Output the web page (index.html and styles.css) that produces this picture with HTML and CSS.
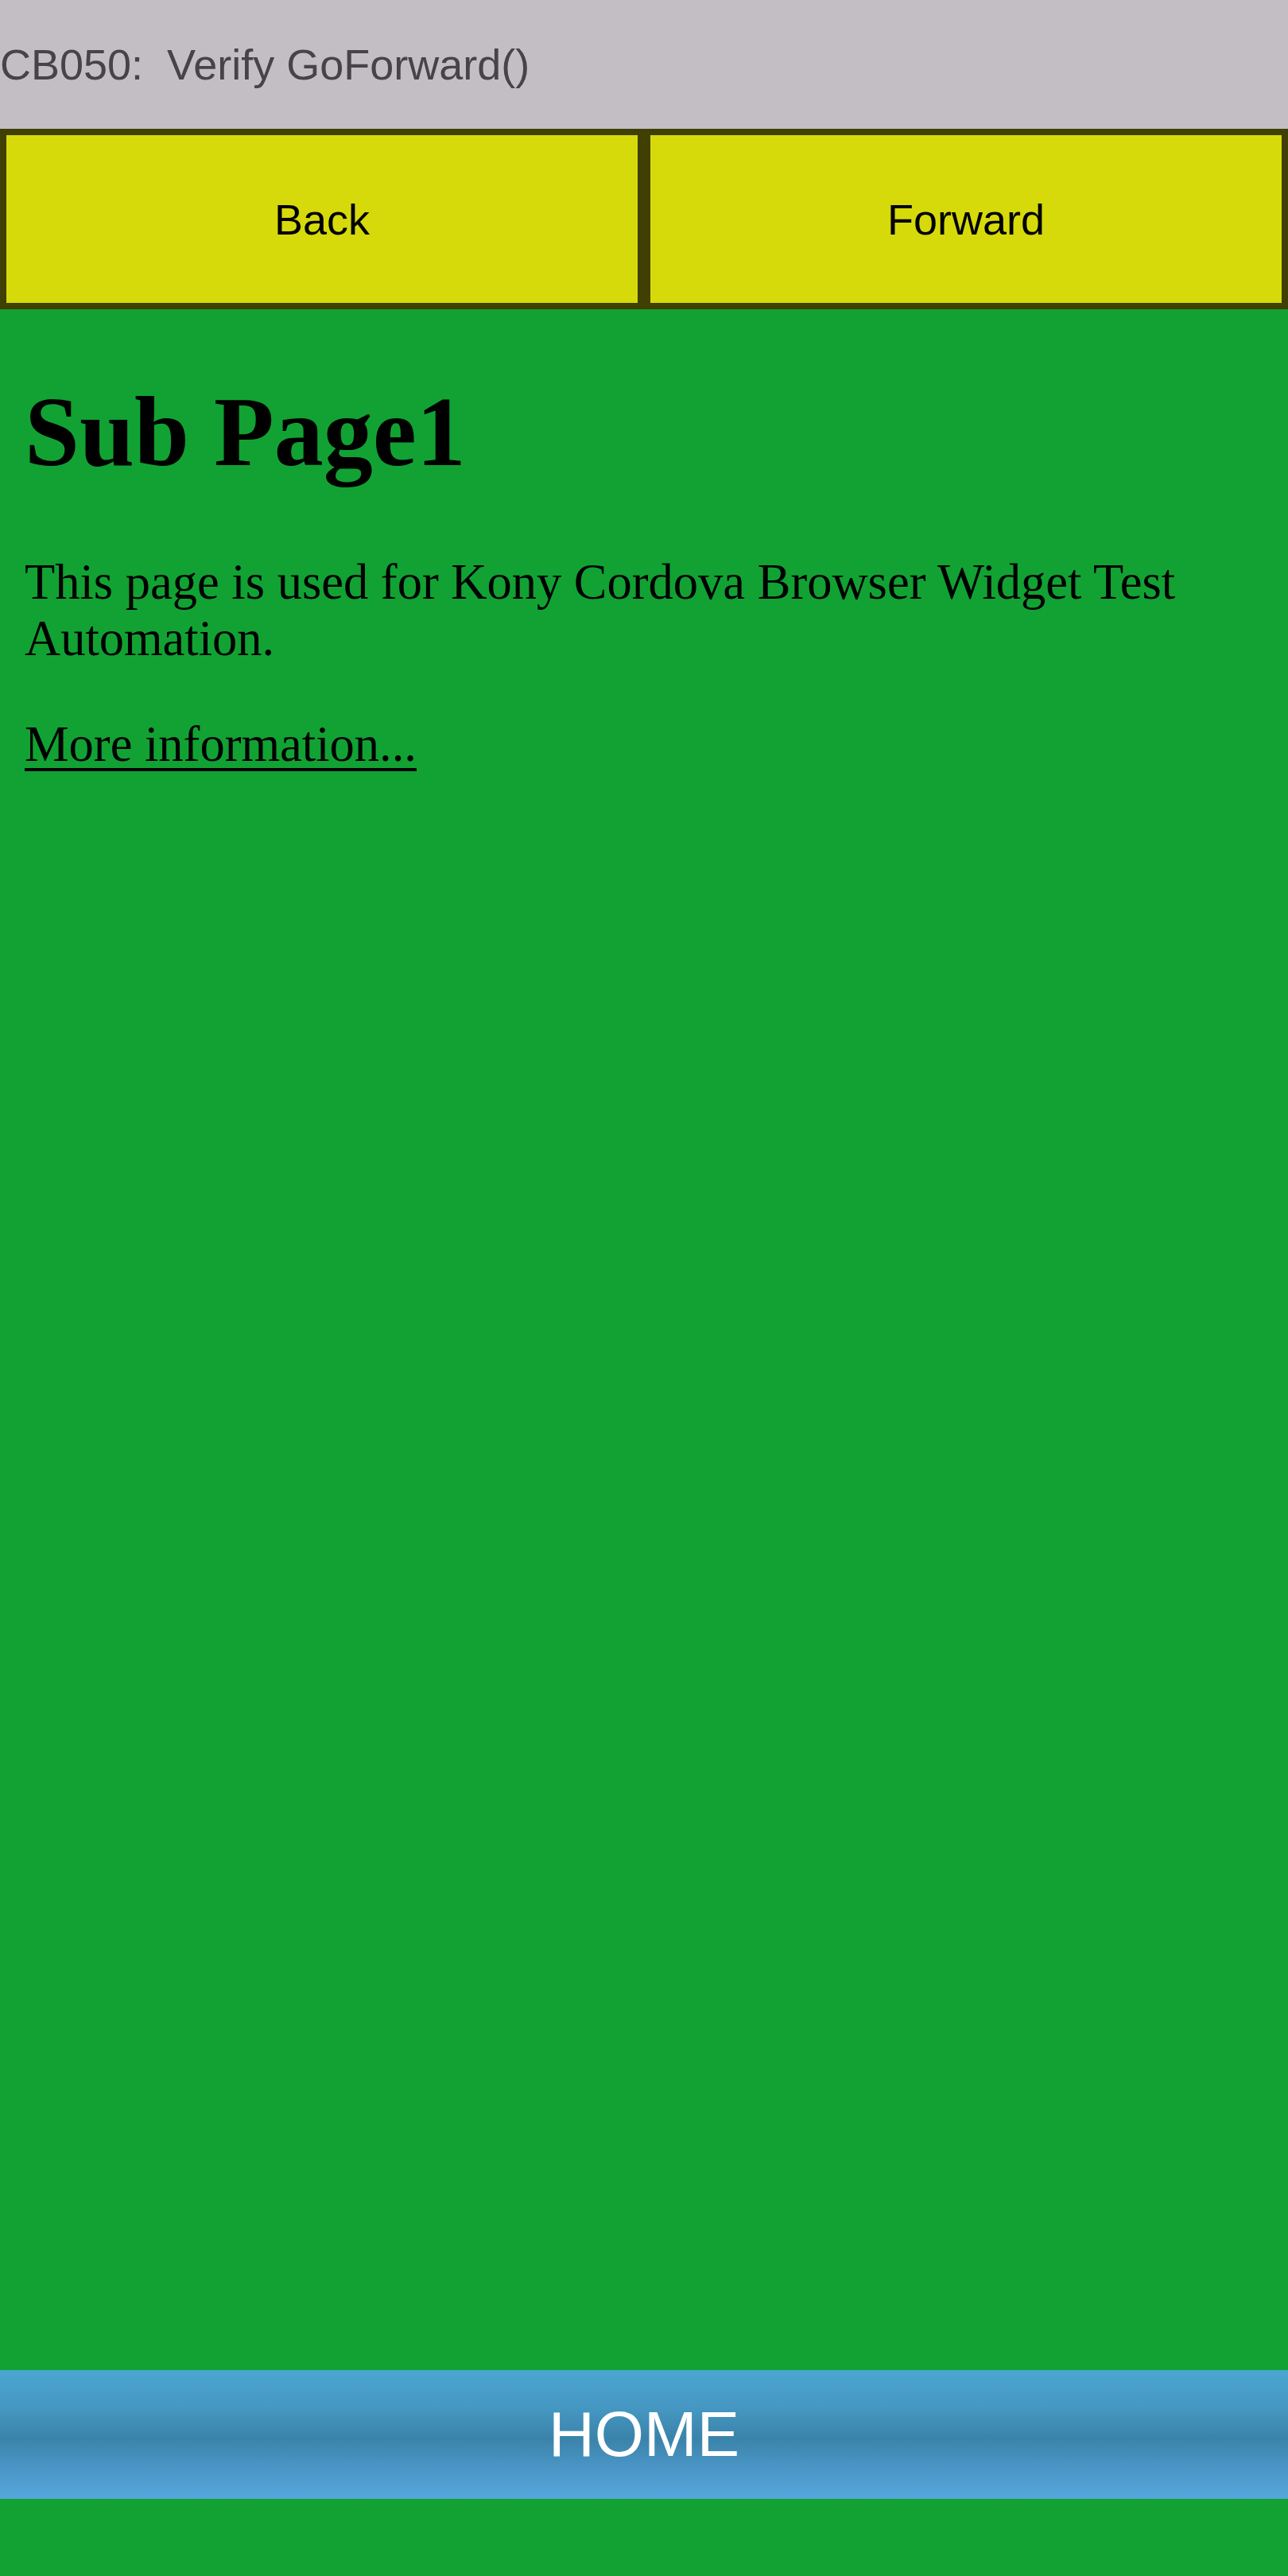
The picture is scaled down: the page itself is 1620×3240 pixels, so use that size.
FILE: index.html
```html
<!DOCTYPE html>
<html lang="en">
<head>
<meta charset="utf-8">
<title>CB050</title>
<link rel="stylesheet" href="styles.css">
</head>
<body>
<div class="app">
  <header class="title-bar"><span class="title-text">CB050:  Verify GoForward()</span></header>
  <nav class="nav-row">
    <button class="nav-btn">Back</button>
    <button class="nav-btn">Forward</button>
  </nav>
  <main class="browser">
    <h1 class="page-title">Sub Page1</h1>
    <p class="page-text">This page is used for Kony Cordova Browser Widget Test Automation.</p>
    <p class="page-text"><a class="page-link" href="#">More information...</a></p>
  </main>
  <footer class="footer">
    <button class="home-btn">HOME</button>
  </footer>
</div>
</body>
</html>
```

FILE: styles.css
```css
html, body {
  margin: 0;
  padding: 0;
}
body {
  background: #11a233;
}
.app {
  width: 1620px;
  height: 3240px;
  display: flex;
  flex-direction: column;
  background: #11a233;
}
.title-bar {
  height: 162px;
  flex: 0 0 162px;
  background: #c3bec3;
  display: flex;
  align-items: center;
}
.title-text {
  font-family: "Liberation Sans", Arial, sans-serif;
  font-size: 54px;
  color: #464448;
  white-space: pre;
}
.nav-row {
  display: flex;
  height: 227px;
  flex: 0 0 227px;
}
.nav-btn {
  flex: 1 1 0;
  margin: 0;
  padding: 0;
  background: #d6da0a;
  border: 8px solid #403f04;
  font-family: "Liberation Sans", Arial, sans-serif;
  font-size: 54px;
  color: #000;
  display: flex;
  align-items: center;
  justify-content: center;
}
.browser {
  flex: 1 1 auto;
  padding: 84px 31px 0;
  font-family: "Liberation Serif", "Times New Roman", serif;
  color: #000;
}
.page-title {
  font-size: 124px;
  font-weight: bold;
  margin: 0 0 82px;
  line-height: 142px;
}
.page-text {
  font-size: 62.5px;
  line-height: 71px;
  margin: 0 0 62px;
}
.page-link {
  color: #000;
  text-decoration: underline;
  text-decoration-thickness: 4px;
  text-underline-offset: 9px;
}
.footer {
  flex: 0 0 259px;
  padding-bottom: 97px;
  box-sizing: border-box;
  display: flex;
  flex-direction: column;
}
.home-btn {
  height: 162px;
  margin: 0;
  padding: 0;
  border: 0;
  background: linear-gradient(to bottom, #4aa6d1 0%, #4597c2 30%, #3a83aa 53%, #4a95c6 75%, #55a7dd 100%);
  color: #fff;
  font-family: "Liberation Sans", Arial, sans-serif;
  font-size: 80px;
  display: flex;
  align-items: center;
  justify-content: center;
}
```
